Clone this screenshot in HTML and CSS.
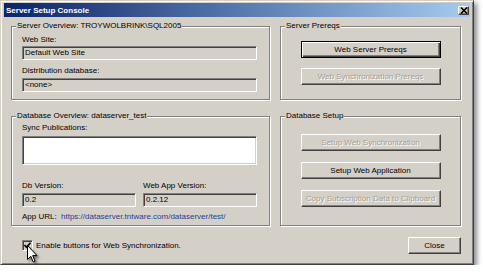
FILE: index.html
```html
<!DOCTYPE html>
<html lang="en">
<head>
    <meta charset="UTF-8">
    <title>Server Setup Console</title>
    <link rel="stylesheet" href="styles.css">
</head>
<body>

    <div class="window">
        <div class="titlebar">
            <span class="title">Server Setup Console</span>
            <span class="close-x">
                <svg width="8" height="7" viewBox="0 0 8 7"><path d="M1 0.5 L7 6.5 M7 0.5 L1 6.5" stroke="#000" stroke-width="1.6"/></svg>
            </span>
        </div>

        <div class="client">
            <div class="groups">
                <div class="group">
                    <div class="group-title">Server Overview: TROYWOLBRINK\SQL2005</div>
                    <div class="overview">
                        <div class="field-label first">Web Site:</div>
                        <div class="textbox">Default Web Site</div>
                        <div class="field-label second">Distribution database:</div>
                        <div class="textbox tight">&lt;none&gt;</div>
                    </div>
                </div>

                <div class="group">
                    <div class="group-title">Server Prereqs</div>
                    <div class="button-stack prereqs">
                        <button class="btn default">Web Server Prereqs</button>
                        <button class="btn" disabled>Web Synchronization Prereqs</button>
                    </div>
                </div>

                <div class="group">
                    <div class="group-title">Database Overview: dataserver_test</div>
                    <div class="db-overview">
                        <div class="field-label sync">Sync Publications:</div>
                        <div class="listbox"></div>
                        <div class="versions">
                            <div class="field-label">Db Version:</div>
                            <div class="field-label">Web App Version:</div>
                            <div class="textbox">0.2</div>
                            <div class="textbox">0.2.12</div>
                        </div>
                        <div class="app-url">
                            <span class="url-label">App URL:</span>
                            <span class="link">https://dataserver.tntware.com/dataserver/test/</span>
                        </div>
                    </div>
                </div>

                <div class="group">
                    <div class="group-title">Database Setup</div>
                    <div class="button-stack setup">
                        <button class="btn" disabled>Setup Web Synchronization</button>
                        <button class="btn">Setup Web Application</button>
                        <button class="btn" disabled>Copy Subscription Data to Clipboard</button>
                    </div>
                </div>
            </div>

            <div class="footer">
                <div class="check-row">
                    <span class="checkbox">
                        <svg width="9" height="9" viewBox="0 0 9 9"><path d="M1.5 4 L3.5 6.2 L7.5 1.8" fill="none" stroke="#000" stroke-width="1.7"/></svg>
                    </span>
                    <span>Enable buttons for Web Synchronization.</span>
                    <!-- mouse pointer sitting on the checkbox -->
                    <svg class="cursor" width="12" height="19" viewBox="0 0 12 19">
                        <path d="M0.5 0.5 V14.5 L3.8 11.3 L6.2 17 L8 16.2 L5.7 10.6 H10 Z" fill="#fff" stroke="#000" stroke-width="1" stroke-linejoin="round"/>
                    </svg>
                </div>
                <button class="btn close">Close</button>
            </div>
        </div>
    </div>

</body>
</html>
```

FILE: styles.css
```css
body {
    margin: 0;
    background: #ffffff;
    font-family: "Liberation Sans", Arial, sans-serif;
    font-size: 8px;
    color: #000;
}

.window {
    width: 474px;
    height: 265px;
    box-sizing: border-box;
    padding: 2px 3px 3px 3px;
    background: #d4d0c8;
    border: 1px solid;
    border-color: #d4d0c8 #404040 #404040 #d4d0c8;
    box-shadow: inset 1px 1px 0 #fff, inset -1px -1px 0 #808080, 3px 3px 5px rgba(0, 0, 0, 0.45);
}

/* Title bar */
.titlebar {
    height: 14px;
    display: flex;
    align-items: center;
    padding: 0 1px 0 2px;
    background: linear-gradient(to right, #0a246a, #a6caf0);
}
.title {
    color: #fff;
    font-weight: bold;
    font-size: 8px;
}
.close-x {
    margin-left: auto;
    width: 11px;
    height: 9px;
    box-sizing: border-box;
    display: flex;
    align-items: center;
    justify-content: center;
    background: #d4d0c8;
    border: 1px solid;
    border-color: #fff #404040 #404040 #fff;
    box-shadow: inset -1px -1px 0 #808080;
}

.client {
    padding: 9px 9px 0 7px;
}

.groups {
    display: grid;
    grid-template-columns: 259px 181px;
    grid-template-rows: 74px 110px;
    column-gap: 10px;
    row-gap: 16px;
}

/* Etched group boxes */
.group {
    border: 1px solid #808080;
    box-shadow: 1px 1px 0 #fff, inset 1px 1px 0 #fff;
}
.group-title {
    width: fit-content;
    margin: -6px 0 0 4px;
    padding: 0 1px;
    line-height: 10px;
    background: #d4d0c8;
}

.field-label {
    line-height: 10px;
}

.overview {
    padding: 0 12px 0 10px;
}
.overview .first {
    margin-top: 4px;
}
.overview .textbox {
    margin-top: 1px;
}
.overview .second {
    margin-top: 6px;
}
.overview .tight {
    margin-top: 2px;
}

.textbox, .listbox {
    box-sizing: border-box;
    border: 1px solid;
    border-color: #808080 #fff #fff #808080;
    box-shadow: inset 1px 1px 0 #404040, inset -1px -1px 0 #d4d0c8;
}
.textbox {
    height: 14px;
    line-height: 12px;
    padding-left: 2px;
}
.listbox {
    height: 29px;
    margin-top: 3px;
    background: #fff;
}

.db-overview {
    padding: 0 12px 0 10px;
}
.db-overview .sync {
    margin-top: 2px;
}
.versions {
    display: grid;
    grid-template-columns: 114px 114px;
    column-gap: 7px;
    row-gap: 2px;
    margin-top: 16px;
}
.app-url {
    display: flex;
    line-height: 10px;
    margin-top: 5px;
}
.url-label {
    width: 39px;
}
.link {
    color: #1f3d99;
}

/* Buttons */
.button-stack {
    display: flex;
    flex-direction: column;
    align-items: center;
}
.prereqs {
    padding-top: 10px;
    gap: 10px;
}
.setup {
    padding-top: 13px;
    gap: 11px;
}

.btn {
    width: 140px;
    height: 17px;
    box-sizing: border-box;
    padding: 0;
    font-family: inherit;
    font-size: 8px;
    color: #000;
    background: #d4d0c8;
    border: 1px solid;
    border-color: #fff #404040 #404040 #fff;
    box-shadow: inset -1px -1px 0 #808080;
}
.btn.default {
    border-color: #000;
    box-shadow: inset 1px 1px 0 #fff, inset -1px -1px 0 #404040, inset -2px -2px 0 #808080;
}
.btn:disabled {
    color: #a19e96;
    text-shadow: 1px 1px 0 #fff;
}

/* Footer */
.footer {
    display: flex;
    align-items: center;
    justify-content: space-between;
    margin-top: 11px;
    padding-left: 11px;
    width: 450px;
    box-sizing: border-box;
}
.check-row {
    position: relative;
    display: flex;
    align-items: center;
    gap: 3px;
}
.checkbox {
    width: 11px;
    height: 11px;
    box-sizing: border-box;
    display: flex;
    align-items: center;
    justify-content: center;
    background: #d4d0c8;
    border: 1px solid;
    border-color: #808080 #fff #fff #808080;
    box-shadow: inset 1px 1px 0 #404040;
}
.cursor {
    position: absolute;
    left: 5px;
    top: 5px;
    filter: drop-shadow(2px 2px 1px rgba(0, 0, 0, 0.45));
}
.btn.close {
    width: 53px;
}
```
